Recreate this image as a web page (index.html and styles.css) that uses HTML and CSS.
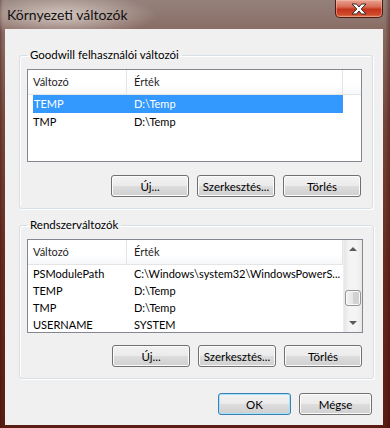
FILE: index.html
```html
<!DOCTYPE html>
<html lang="hu">
<head>
  <meta charset="UTF-8" />
  <title>Környezeti változók</title>
  <link rel="stylesheet" href="styles.css">
</head>
<body>
  <div class="window">
    <div class="titlebar">
      <span class="title">Környezeti változók</span>
      <button class="close" aria-label="Bezárás">
        <svg width="20" height="12" viewBox="0 0 20 12">
          <path d="M3 1h4.5l2.5 3 2.5-3H17l-4.8 5 4.8 5h-4.5L10 8 7.5 11H3l4.8-5z"
                fill="#fff" stroke="#3a2a28" stroke-width="1" stroke-linejoin="round"/>
        </svg>
      </button>
    </div>

    <div class="client">
      <!-- felhasználói változók -->
      <fieldset class="group">
        <legend>Goodwill felhasználói változói</legend>
        <div class="list user-list">
          <div class="list-main">
            <div class="row head">
              <span class="c1">Változó</span>
              <span class="c2">Érték</span>
              <span class="c3"></span>
            </div>
            <div class="row selected"><span class="c1">TEMP</span><span class="c2">D:\Temp</span></div>
            <div class="row"><span class="c1">TMP</span><span class="c2">D:\Temp</span></div>
          </div>
        </div>
        <div class="buttons">
          <button class="btn">Új...</button>
          <button class="btn">Szerkesztés...</button>
          <button class="btn">Törlés</button>
        </div>
      </fieldset>

      <!-- rendszerváltozók -->
      <fieldset class="group second">
        <legend>Rendszerváltozók</legend>
        <div class="list sys-list">
          <div class="list-main">
            <div class="row head">
              <span class="c1">Változó</span>
              <span class="c2">Érték</span>
            </div>
            <div class="row"><span class="c1">PSModulePath</span><span class="c2">C:\Windows\system32\WindowsPowerS...</span></div>
            <div class="row"><span class="c1">TEMP</span><span class="c2">D:\Temp</span></div>
            <div class="row"><span class="c1">TMP</span><span class="c2">D:\Temp</span></div>
            <div class="row"><span class="c1">USERNAME</span><span class="c2">SYSTEM</span></div>
          </div>
          <div class="scrollbar">
            <span class="arrow up"></span>
            <span class="track"><span class="thumb"></span></span>
            <span class="arrow down"></span>
          </div>
        </div>
        <div class="buttons">
          <button class="btn">Új...</button>
          <button class="btn">Szerkesztés...</button>
          <button class="btn">Törlés</button>
        </div>
      </fieldset>

      <div class="dialog-buttons">
        <button class="btn default">OK</button>
        <button class="btn">Mégse</button>
      </div>
    </div>
  </div>
</body>
</html>
```

FILE: styles.css
```css
body {
  margin: 0;
  font-family: Lato, "Noto Sans", sans-serif;
  font-size: 11px;
  color: #000;
}

.window {
  width: 390px;
  height: 428px;
  display: flex;
  flex-direction: column;
  background:
    radial-gradient(ellipse 95px 22px at 62px 15px, rgba(235, 225, 220, 0.75), rgba(235, 225, 220, 0) 100%),
    linear-gradient(to right, rgba(60, 10, 5, 0.35) 0, rgba(0, 0, 0, 0) 3px, rgba(0, 0, 0, 0) 385px, rgba(60, 10, 5, 0.4) 390px),
    linear-gradient(to bottom, #94817b 0, #8a6e66 28px, #76473c 120px, #672b1f 260px, #5a1d13 428px);
}

/* title bar */
.titlebar {
  height: 29px;
  display: flex;
  justify-content: space-between;
  align-items: flex-start;
}
.title {
  padding-left: 7px;
  line-height: 30px;
  font-size: 14px;
  color: #111;
}
.close {
  width: 48px;
  height: 18px;
  margin-right: 7px;
  padding: 0;
  border: 1px solid #4a1b12;
  border-top: none;
  border-radius: 0 0 5px 5px;
  background: linear-gradient(to bottom, #e8a494 0, #d96c55 40%, #c4341c 55%, #cf4a2c 85%, #e07a50 100%);
  box-shadow: inset 0 0 0 1px rgba(255, 200, 180, 0.45);
  display: flex;
  align-items: center;
  justify-content: center;
}
.close svg { display: block; }

/* client area */
.client {
  flex: 1;
  margin: 0 7px 3px 5px;
  padding: 18px 10px 0 14px;
  background: #f0f0f0;
  display: flex;
  flex-direction: column;
}

.group {
  margin: 0;
  padding: 6px 10px 11px 7px;
  border: 1px solid #d5dfe5;
  border-radius: 3px;
  box-shadow: inset 1px 1px 0 #fff, 1px 1px 0 #fff;
}
.group.second {
  margin-top: 8px;
}
.group legend {
  margin-left: 0;
  padding: 0 3px;
  line-height: 16px;
  font-size: 11.5px;
  color: #000;
}

/* list views */
.list {
  height: 93px;
  box-sizing: border-box;
  border: 1px solid #828790;
  background: #fff;
  display: flex;
  overflow: hidden;
}
.sys-list {
  height: 94px;
}
.list-main {
  flex: 1;
  min-width: 0;
}
.row {
  display: flex;
  height: 18px;
  line-height: 18px;
  white-space: nowrap;
}
.sys-list .row {
  height: 17px;
  line-height: 17px;
}
.row .c1 {
  width: 99px;
  padding-left: 5px;
  box-sizing: border-box;
}
.row .c2 {
  width: 216px;
  padding-left: 7px;
  box-sizing: border-box;
  overflow: hidden;
}
.row.head,
.sys-list .row.head {
  height: 24px;
  line-height: 24px;
  background: linear-gradient(to bottom, #fff 0, #fff 60%, #f7f8fa 100%);
  border-bottom: 1px solid #e5e5e5;
  color: #1e1e1e;
}
.row.head .c1,
.row.head .c2 {
  border-right: 1px solid #e5e5e5;
}
.row.head .c3 {
  flex: 1;
}
.row.selected {
  margin-left: 5px;
}
.row.selected .c1 {
  width: 94px;
  padding-left: 1px;
}
.row.selected .c1,
.row.selected .c2 {
  background: #3399ff;
  color: #fff;
}

/* scrollbar */
.scrollbar {
  width: 18px;
  display: flex;
  flex-direction: column;
  background: linear-gradient(to right, #e6e6e6 0, #f4f4f4 30%, #f4f4f4 70%, #e9e9e9 100%);
  border-left: 1px solid #eeeeee;
}
.arrow {
  height: 17px;
  position: relative;
}
.arrow::after {
  content: "";
  position: absolute;
  left: 5px;
  top: 7px;
  border-left: 4px solid transparent;
  border-right: 4px solid transparent;
}
.arrow.up::after {
  border-bottom: 4px solid #5a5a5a;
}
.arrow.down::after {
  top: 6px;
  border-top: 4px solid #5a5a5a;
}
.track {
  flex: 1;
  padding: 33px 1px 0 1px;
}
.thumb {
  display: block;
  height: 16px;
  box-sizing: border-box;
  border: 1px solid #959595;
  border-radius: 3px;
  background: linear-gradient(to right, #f2f2f2 0, #e6e6e6 50%, #d4d4d4 51%, #cfcfcf 100%);
  box-shadow: inset 0 0 0 1px #fafafa;
}

/* buttons */
.buttons {
  display: flex;
  justify-content: flex-end;
  gap: 8px;
  margin-top: 13px;
  padding-right: 1px;
}
.second .buttons {
  margin-top: 12px;
}
.btn {
  width: 78px;
  height: 22px;
  padding: 0;
  font-family: Lato, "Noto Sans", sans-serif;
  font-size: 11.5px;
  color: #000;
  border: 1px solid #707070;
  border-radius: 3px;
  background: linear-gradient(to bottom, #f2f2f2 0, #ebebeb 48%, #dddddd 52%, #cfcfcf 100%);
  box-shadow: inset 0 0 0 1px #fcfcfc;
}
.dialog-buttons {
  display: flex;
  justify-content: flex-end;
  gap: 8px;
  margin-top: 14px;
  padding-right: 1px;
}
.dialog-buttons .btn {
  width: 73px;
}
.btn.default {
  border-color: #3c7fb1;
  box-shadow: inset 0 0 0 1px #a6e2fb;
}
```
